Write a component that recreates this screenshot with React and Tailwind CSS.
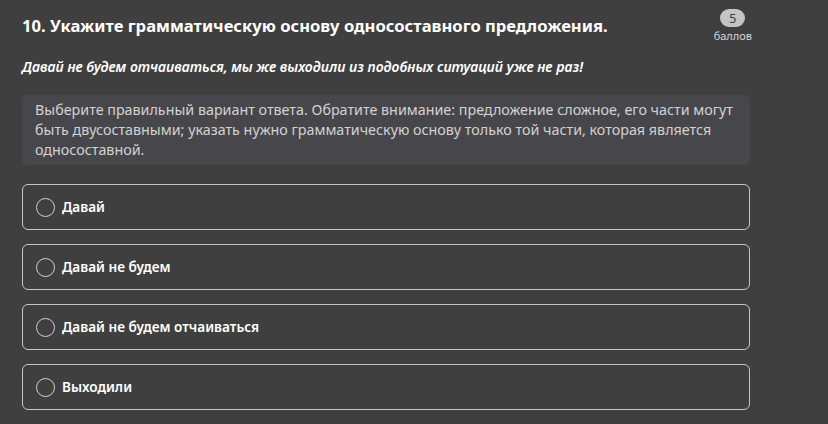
import React from 'react';

const options = ['Давай', 'Давай не будем', 'Давай не будем отчаиваться', 'Выходили'];

const App = () => {
  return (
    <div
      className="w-[828px] h-[424px] overflow-hidden bg-[#3f3f3f] text-white"
      style={{ fontFamily: '"Noto Sans", "Open Sans", sans-serif' }}
    >
      <div className="w-[728px] ml-[22px] pt-[12px]">
        {/* Header */}
        <div className="flex items-start justify-between">
          <h1 className="text-[16.6px] leading-[28px] font-bold text-white">
            10. Укажите грамматическую основу односоставного предложения.
          </h1>
          <div className="flex flex-col items-center mr-[-2px] mt-[-3px]">
            <span className="w-[25px] h-[18px] rounded-full bg-[#c4c4c4] text-[#3f3f3f] text-[13px] leading-[18px] text-center">
              5
            </span>
            <span className="mt-[1px] text-[11px] leading-[16px] text-[#d6d6d6]">баллов</span>
          </div>
        </div>

        {/* Sentence */}
        <p className="mt-[13px] text-[14px] leading-[20px] font-semibold italic">
          Давай не будем отчаиваться, мы же выходили из подобных ситуаций уже не раз!
        </p>

        {/* Instruction */}
        <div className="mt-[18px] rounded-[5px] bg-[#47474b] pl-[13px] pr-[6px] py-[5px] text-[14.3px] leading-[20px] text-[#d2d2d4]">
          Выберите правильный вариант ответа. Обратите внимание: предложение сложное, его части могут быть
          двусоставными; указать нужно грамматическую основу только той части, которая является
          односоставной.
        </div>

        {/* Options */}
        <div className="mt-[19px] flex flex-col gap-[14px]">
          {options.map((o) => (
            <label
              key={o}
              className="h-[46px] flex items-center rounded-[6px] border border-[#c6c6c6] pl-[13px]"
            >
              <span className="w-[19px] h-[19px] rounded-full border border-[#d0d0d0] shrink-0" />
              <span className="ml-[7px] text-[13.6px] font-semibold text-white">{o}</span>
            </label>
          ))}
        </div>
      </div>
    </div>
  );
};

export default App;
